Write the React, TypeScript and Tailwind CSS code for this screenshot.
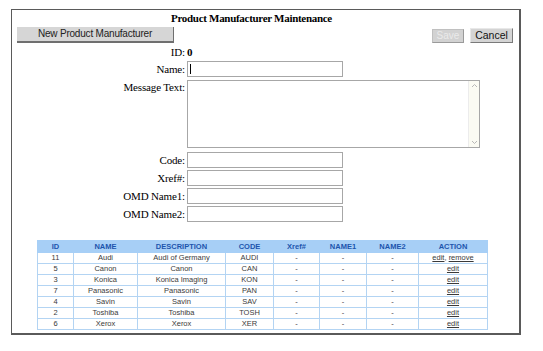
import React from "react";

const rows = [
  ["11", "Audi", "Audi of Germany", "AUDI", "-", "-", "-", "remove"],
  ["5", "Canon", "Canon", "CAN", "-", "-", "-", ""],
  ["3", "Konica", "Konica Imaging", "KON", "-", "-", "-", ""],
  ["7", "Panasonic", "Panasonic", "PAN", "-", "-", "-", ""],
  ["4", "Savin", "Savin", "SAV", "-", "-", "-", ""],
  ["2", "Toshiba", "Toshiba", "TOSH", "-", "-", "-", ""],
  ["6", "Xerox", "Xerox", "XER", "-", "-", "-", ""],
];

const widths = [36, 64, 88, 48, 46, 47, 52, 69];
const headers = ["ID", "NAME", "DESCRIPTION", "CODE", "Xref#", "NAME1", "NAME2", "ACTION"];

function Label({ children }: { children: React.ReactNode }) {
  return (
    <div className="w-[174px] shrink-0 text-right pr-[1px] text-[11px] tracking-[-0.15px] text-black" style={{ fontFamily: '"Liberation Serif", serif' }}>
      {children}
    </div>
  );
}

function Field({ label, caret }: { label: string; caret?: boolean }) {
  return (
    <div className="flex items-center h-[16px] leading-[16px]">
      <Label>{label}</Label>
      <div className="ml-[1px] w-[156px] h-[16px] border border-[#a7a7a7] bg-white relative">
        {caret && <div className="absolute left-[2px] top-[2px] w-[1px] h-[10px] bg-black" />}
      </div>
    </div>
  );
}

export default function App() {
  return (
    <div className="w-[543px] h-[351px] bg-white pt-[9px] pl-[11px]" style={{ fontFamily: '"Liberation Sans", sans-serif' }}>
      <div className="w-[510px] h-[326px] border border-[#5a5a5a] border-r-2 border-b-2 flex flex-col">
        <div
          className="h-[16px] leading-[16px] text-center font-bold text-[11px] tracking-[-0.3px] text-black pr-[28px]"
          style={{ fontFamily: '"Liberation Serif", serif' }}
        >
          Product Manufacturer Maintenance
        </div>
        <div className="flex items-end h-[16px] mt-[1px] pl-[5px] pr-[6px]">
          <div className="w-[157px] h-[16px] bg-[#d6d6d6] border-b-2 border-r border-b-[#6f6f6f] border-r-[#6f6f6f] text-center text-[10px] leading-[14px] text-[#222] tracking-[-0.2px]">
            New Product Manufacturer
          </div>
          <div className="flex-1" />
          <div className="w-[32px] h-[14px] bg-[#d2d2d2] border border-[#c0c0c0] border-b-[#9a9a9a] border-r-[#9a9a9a] text-center text-[10px] leading-[12px] text-[#eaeaea]">
            Save
          </div>
          <div className="ml-[6px] w-[43px] h-[15px] bg-[#d4d4d4] border border-[#e8e8e8] border-b-[#7a7a7a] border-r-[#7a7a7a] text-center text-[10.5px] leading-[13px] text-[#111]">
            Cancel
          </div>
        </div>
        <div className="flex items-center h-[16px] mt-[1px]">
          <Label>ID:</Label>
          <span className="ml-[1px] text-[11px] font-bold" style={{ fontFamily: '"Liberation Serif", serif' }}>0</span>
        </div>
        <div className="mt-[1px]">
          <Field label="Name:" caret />
        </div>
        <div className="flex mt-[3px]">
          <Label>
            <span className="block leading-[14px]">Message Text:</span>
          </Label>
          <div className="ml-[1px] w-[293px] h-[68px] border border-[#a7a7a7] bg-white flex justify-end">
            <div className="w-[11px] h-full bg-[#fbfbf3] border-l border-[#ececec] flex flex-col justify-between items-center py-[2px]">
              <svg width="7" height="5" viewBox="0 0 7 5"><path d="M1 4 L3.5 1.5 L6 4" fill="none" stroke="#b8b8b8" strokeWidth="1" /></svg>
              <svg width="7" height="5" viewBox="0 0 7 5"><path d="M1 1 L3.5 3.5 L6 1" fill="none" stroke="#b8b8b8" strokeWidth="1" /></svg>
            </div>
          </div>
        </div>
        <div className="flex flex-col gap-[2px] mt-[4px]">
          <Field label="Code:" />
          <Field label="Xref#:" />
          <Field label="OMD Name1:" />
          <Field label="OMD Name2:" />
        </div>
        <div className="ml-[25px] mt-[18px]">
          <table className="table-fixed border-collapse text-[7.5px]" style={{ width: 450, fontFamily: '"Liberation Sans", sans-serif' }}>
            <colgroup>
              {widths.map((w, i) => (
                <col key={i} style={{ width: w }} />
              ))}
            </colgroup>
            <thead>
              <tr className="bg-[#a7cff6]">
                {headers.map((h) => (
                  <th key={h} className="h-[12px] p-0 leading-[11px] font-bold text-[#1d55ad] text-center border border-[#a7cff6]">
                    {h}
                  </th>
                ))}
              </tr>
            </thead>
            <tbody>
              {rows.map((r) => (
                <tr key={r[0]}>
                  {r.slice(0, 7).map((c, i) => (
                    <td key={i} className="h-[11px] p-0 leading-[10px] text-center text-[#3a3a3a] border border-[#b3d4f3]">
                      {c}
                    </td>
                  ))}
                  <td className="h-[11px] p-0 leading-[10px] text-center text-[#3a3a3a] border border-[#b3d4f3]">
                    <span className="underline">edit</span>
                    {r[7] && (
                      <>
                        , <span className="underline">remove</span>
                      </>
                    )}
                  </td>
                </tr>
              ))}
            </tbody>
          </table>
        </div>
      </div>
    </div>
  );
}
